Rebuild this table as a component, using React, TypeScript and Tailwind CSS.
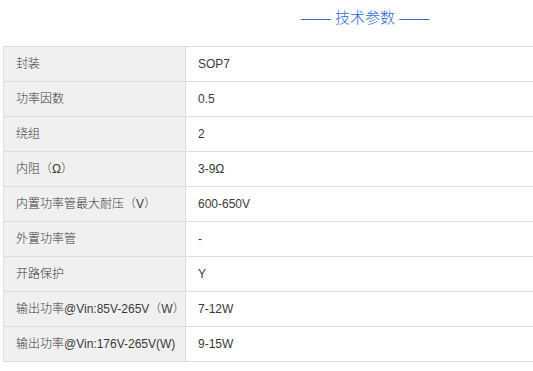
const rows: [string, string][] = [
  ['封装', 'SOP7'],
  ['功率因数', '0.5'],
  ['绕组', '2'],
  ['内阻（Ω）', '3-9Ω'],
  ['内置功率管最大耐压（V）', '600-650V'],
  ['外置功率管', '-'],
  ['开路保护', 'Y'],
  ['输出功率@Vin:85V-265V（W）', '7-12W'],
  ['输出功率@Vin:176V-265V(W)', '9-15W'],
];

export default function App() {
  return (
    <div
      className="h-[371px] w-[533px] overflow-hidden bg-white"
      style={{ fontFamily: '"Liberation Sans", "Noto Sans CJK SC", sans-serif' }}
    >
      <div className="ml-[3px] w-[724px]">
        <div className="flex h-[36px] items-center justify-center text-[15px] font-light text-[#2f6bd8]">
          —— 技术参数 ——
        </div>
        <div className="mt-[10px] border-l border-t border-[#dddddd] text-[12px] font-light text-[#3a3a3a]">
          {rows.map(([k, v]) => (
            <div key={k} className="flex h-[35px] border-b border-[#dddddd]">
              <div className="flex w-[182px] shrink-0 items-center border-r border-[#dddddd] bg-[#f0f0f0] pl-3">
                {k}
              </div>
              <div className="flex flex-1 items-center pl-3">{v}</div>
            </div>
          ))}
        </div>
      </div>
    </div>
  );
}
